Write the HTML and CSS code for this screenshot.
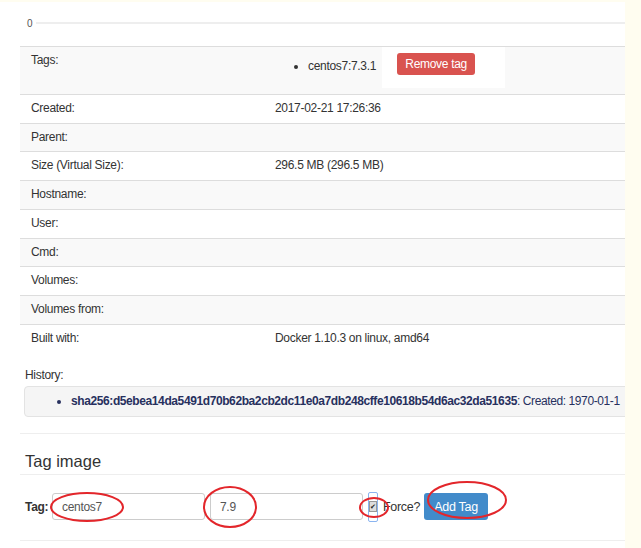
FILE: index.html
```html
<!DOCTYPE html>
<html lang="en">
  <head>
    <title>Image details</title>
    <meta name="viewport" content="width=device-width, initial-scale=1.0">
    <link rel="stylesheet" href="styles.css">
  </head>
  <body>
    <div class="page">
      <div class="chart">
        <span class="axis-label">0</span>
        <span class="axis-line"></span>
      </div>

      <table class="info">
        <tr class="tags-row">
          <td class="key">Tags:</td>
          <td class="val">
            <ul class="tag-list">
              <li>centos7:7.3.1<span class="erase"><button class="btn btn-danger">Remove tag</button></span></li>
            </ul>
          </td>
        </tr>
        <tr><td class="key">Created:</td><td class="val">2017-02-21 17:26:36</td></tr>
        <tr><td class="key">Parent:</td><td class="val"></td></tr>
        <tr><td class="key">Size (Virtual Size):</td><td class="val">296.5 MB (296.5 MB)</td></tr>
        <tr><td class="key">Hostname:</td><td class="val"></td></tr>
        <tr><td class="key">User:</td><td class="val"></td></tr>
        <tr><td class="key">Cmd:</td><td class="val"></td></tr>
        <tr><td class="key">Volumes:</td><td class="val"></td></tr>
        <tr><td class="key">Volumes from:</td><td class="val"></td></tr>
        <tr><td class="key">Built with:</td><td class="val">Docker 1.10.3 on linux, amd64</td></tr>
      </table>

      <div class="history">
        <div class="history-label">History:</div>
        <div class="well">
          <ul>
            <li><b>sha256:d5ebea14da5491d70b62ba2cb2dc11e0a7db248cffe10618b54d6ac32da51635</b>: Created: 1970-01-1</li>
          </ul>
        </div>
      </div>

      <hr class="rule">

      <h3 class="section-title">Tag image</h3>

      <form class="tag-form">
        <label class="tag-label">Tag:</label>
        <input type="text" class="field" value="centos7">
        <input type="text" class="field" value="7.9">
        <span class="check-wrap"><span class="check">&#10004;</span></span>
        <span class="force">Force?</span>
        <button type="button" class="btn btn-primary">Add Tag</button>
      </form>

      <hr class="rule rule-bottom">

      <svg class="marks" width="625" height="548" viewBox="0 0 625 548">
        <ellipse cx="87" cy="507" rx="36" ry="14" />
        <ellipse cx="230" cy="507" rx="26" ry="20" />
        <ellipse cx="374" cy="507.5" rx="14" ry="9.5" />
        <ellipse cx="467" cy="500" rx="39" ry="18" />
      </svg>
    </div>
  </body>
</html>
```

FILE: styles.css
```css
body {
  margin: 0;
  background-color: #fffdf0;
  font-family: "Liberation Sans", Arial, sans-serif;
  font-size: 12px;
  letter-spacing: -0.3px;
  color: #333;
}
.page {
  position: relative;
  width: 625px;
  height: 546px;
  margin-top: 2px;
  background-color: #fff;
  overflow: hidden;
}

.chart {
  display: flex;
  align-items: center;
  height: 42px;
  padding-left: 27px;
}
.axis-label {
  font-size: 10px;
  color: #555;
  width: 9px;
}
.axis-line {
  flex: 1;
  height: 2px;
  background-color: #eeeeee;
}

.info {
  margin-left: 20px;
  width: 605px;
  border-collapse: collapse;
  margin-top: 2px;
}
.info td {
  border-top: 1px solid #dddddd;
  line-height: 17.7px;
  padding: 5px 0;
  vertical-align: top;
}
.info tr:nth-child(odd) td {
  background-color: #f9f9f9;
}
.info .key {
  width: 244px;
  padding-left: 11px;
}
.tags-row td {
  height: 37px;
}
.tags-row .val {
  padding: 0;
}
.tag-list {
  margin: 0;
  padding-left: 33px;
}
.tag-list li {
  padding-top: 10px;
  line-height: 18px;
}
.erase {
  display: inline-block;
  vertical-align: top;
  background-color: #fff;
  margin: -10px 0 0 6px;
  padding: 6px 30px 13px 15px;
  line-height: 22px;
}
.btn {
  font-family: "Liberation Sans", Arial, sans-serif;
  letter-spacing: -0.3px;
  border: none;
  border-radius: 3px;
  color: #fff;
  cursor: pointer;
  vertical-align: top;
}
.btn-danger {
  background-color: #d9534f;
  font-size: 12px;
  width: 78px;
  height: 22px;
  padding: 0;
}
.btn-primary {
  background-color: #428bca;
  font-size: 12.5px;
  width: 64px;
  height: 27px;
  padding: 0;
  margin-left: 4px;
  vertical-align: middle;
}

.history {
  padding-left: 24px;
}
.history-label {
  margin-top: 15px;
  padding-left: 1px;
  line-height: 17px;
}
.well {
  margin-top: 2px;
  margin-right: -60px;
  background-color: #f5f5f5;
  border: 1px solid #e3e3e3;
  border-radius: 4px;
  padding: 6px 0;
  line-height: 17px;
  white-space: nowrap;
  letter-spacing: -0.4px;
  color: #27305e;
}
.well ul {
  margin: 0;
  padding-left: 46px;
}

.rule {
  border: none;
  border-top: 1px solid #eeeeee;
  margin: 16px 0 0 20px;
}
.section-title {
  margin: 17px 0 0 20px;
  padding: 0 0 2px 5px;
  font-size: 16.5px;
  font-weight: normal;
  line-height: 21px;
  letter-spacing: 0;
  border-bottom: 1px solid #eeeeee;
}

.tag-form {
  display: flex;
  align-items: center;
  margin: 16px 0 0 25px;
  height: 31px;
}
.tag-label {
  font-weight: bold;
  width: 27px;
}
.field {
  box-sizing: border-box;
  width: 153px;
  height: 27px;
  margin-right: 5px;
  padding: 0 9px;
  border: 1px solid #cccccc;
  border-radius: 3px;
  font-family: "Liberation Sans", Arial, sans-serif;
  font-size: 12px;
  letter-spacing: -0.3px;
  color: #555;
}
.check-wrap {
  box-sizing: border-box;
  width: 10px;
  height: 30px;
  border: 1px solid #8ab4f0;
  border-radius: 2px;
  display: flex;
  align-items: center;
  justify-content: center;
}
.check {
  width: 8px;
  height: 9px;
  background-color: #ddd;
  border: 1px solid #999;
  font-size: 7px;
  line-height: 9px;
  text-align: center;
  color: #222;
  letter-spacing: 0;
}
.force {
  margin-left: 5px;
  font-size: 12.5px;
}
.rule-bottom {
  margin-top: 18px;
}

.marks {
  position: absolute;
  top: -2px;
  left: 0;
  pointer-events: none;
}
.marks ellipse {
  fill: none;
  stroke: #e3262b;
  stroke-width: 2;
}
```
